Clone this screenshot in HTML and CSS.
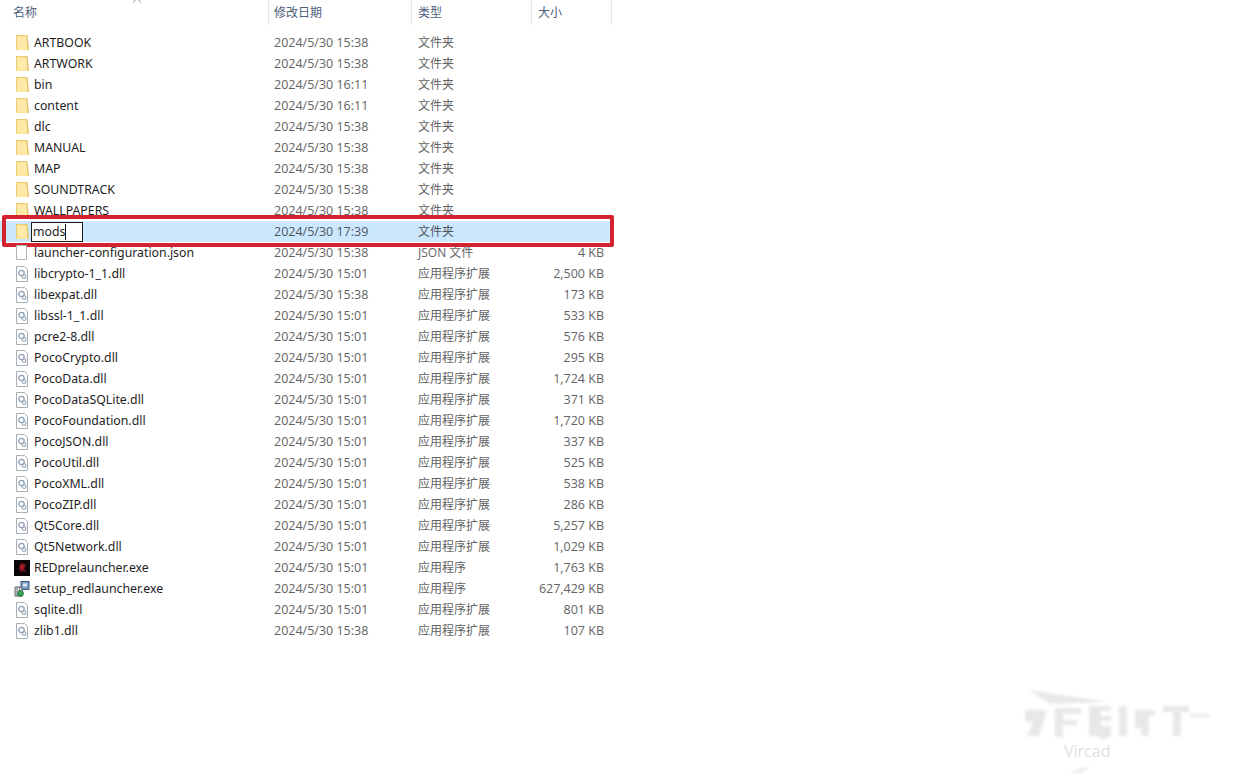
FILE: index.html
```html
<!DOCTYPE html>
<html lang="zh-CN">
  <head>
    <meta charset="UTF-8" />
    <title>mods</title>
    <link rel="stylesheet" href="styles.css">
  </head>
  <body>
    <svg class="icon-defs" width="0" height="0">
      <symbol id="folder" viewBox="0 0 16 16">
        <path d="M2 0h11.500l1.500 15H2z" fill="#fce08a"/>
        <path d="M2 0h11v1H3v13.500H2z" fill="#eccb73"/>
        <path d="M3 1.500h9.500l1 13H3z" fill="#fee9a6"/>
        <path d="M12.800 .5l1.500 14.500" stroke="#d7b566" stroke-width=".9" fill="none"/>
      </symbol>
      <symbol id="blank" viewBox="0 0 16 16">
        <path d="M2.500 .5h10v14h-10z" fill="#fff" stroke="#b4b4b4"/>
      </symbol>
      <symbol id="dll" viewBox="0 0 16 16">
        <path d="M2.500 .5h8l3 3v12h-11z" fill="#fff" stroke="#a9aeb5"/>
        <circle cx="7.500" cy="7" r="2.700" fill="none" stroke="#8a9db3" stroke-width="1.300"/>
        <circle cx="10" cy="10.500" r="1.900" fill="none" stroke="#9fb0bf" stroke-width="1.200"/>
      </symbol>
    </svg>

    <div class="explorer">
      <div class="header">
        <div class="head-cell">名称
          <svg class="sort-arrow" width="10" height="5" viewBox="0 0 10 5"><path d="M1 4.500L5 .5l4 4" fill="none" stroke="#8c8c8c"/></svg>
        </div>
        <div class="head-cell">修改日期</div>
        <div class="head-cell">类型</div>
        <div class="head-cell">大小</div>
      </div>

      <div class="rows">
        <div class="row"><div class="name"><svg class="icon"><use href="#folder"/></svg>ARTBOOK</div><div class="date">2024/5/30 15:38</div><div class="type">文件夹</div><div class="size"></div></div>
        <div class="row"><div class="name"><svg class="icon"><use href="#folder"/></svg>ARTWORK</div><div class="date">2024/5/30 15:38</div><div class="type">文件夹</div><div class="size"></div></div>
        <div class="row"><div class="name"><svg class="icon"><use href="#folder"/></svg>bin</div><div class="date">2024/5/30 16:11</div><div class="type">文件夹</div><div class="size"></div></div>
        <div class="row"><div class="name"><svg class="icon"><use href="#folder"/></svg>content</div><div class="date">2024/5/30 16:11</div><div class="type">文件夹</div><div class="size"></div></div>
        <div class="row"><div class="name"><svg class="icon"><use href="#folder"/></svg>dlc</div><div class="date">2024/5/30 15:38</div><div class="type">文件夹</div><div class="size"></div></div>
        <div class="row"><div class="name"><svg class="icon"><use href="#folder"/></svg>MANUAL</div><div class="date">2024/5/30 15:38</div><div class="type">文件夹</div><div class="size"></div></div>
        <div class="row"><div class="name"><svg class="icon"><use href="#folder"/></svg>MAP</div><div class="date">2024/5/30 15:38</div><div class="type">文件夹</div><div class="size"></div></div>
        <div class="row"><div class="name"><svg class="icon"><use href="#folder"/></svg>SOUNDTRACK</div><div class="date">2024/5/30 15:38</div><div class="type">文件夹</div><div class="size"></div></div>
        <div class="row"><div class="name"><svg class="icon"><use href="#folder"/></svg>WALLPAPERS</div><div class="date">2024/5/30 15:38</div><div class="type">文件夹</div><div class="size"></div></div>
        <div class="row selected">
          <div class="name"><svg class="icon"><use href="#folder"/></svg><div class="rename"><span class="rename-text">mods</span></div></div><div class="date">2024/5/30 17:39</div><div class="type">文件夹</div><div class="size"></div>
          <div class="highlight-box"></div>
        </div>
        <div class="row"><div class="name"><svg class="icon"><use href="#blank"/></svg>launcher-configuration.json</div><div class="date">2024/5/30 15:38</div><div class="type">JSON 文件</div><div class="size">4 KB</div></div>
        <div class="row"><div class="name"><svg class="icon"><use href="#dll"/></svg>libcrypto-1_1.dll</div><div class="date">2024/5/30 15:01</div><div class="type">应用程序扩展</div><div class="size">2,500 KB</div></div>
        <div class="row"><div class="name"><svg class="icon"><use href="#dll"/></svg>libexpat.dll</div><div class="date">2024/5/30 15:38</div><div class="type">应用程序扩展</div><div class="size">173 KB</div></div>
        <div class="row"><div class="name"><svg class="icon"><use href="#dll"/></svg>libssl-1_1.dll</div><div class="date">2024/5/30 15:01</div><div class="type">应用程序扩展</div><div class="size">533 KB</div></div>
        <div class="row"><div class="name"><svg class="icon"><use href="#dll"/></svg>pcre2-8.dll</div><div class="date">2024/5/30 15:01</div><div class="type">应用程序扩展</div><div class="size">576 KB</div></div>
        <div class="row"><div class="name"><svg class="icon"><use href="#dll"/></svg>PocoCrypto.dll</div><div class="date">2024/5/30 15:01</div><div class="type">应用程序扩展</div><div class="size">295 KB</div></div>
        <div class="row"><div class="name"><svg class="icon"><use href="#dll"/></svg>PocoData.dll</div><div class="date">2024/5/30 15:01</div><div class="type">应用程序扩展</div><div class="size">1,724 KB</div></div>
        <div class="row"><div class="name"><svg class="icon"><use href="#dll"/></svg>PocoDataSQLite.dll</div><div class="date">2024/5/30 15:01</div><div class="type">应用程序扩展</div><div class="size">371 KB</div></div>
        <div class="row"><div class="name"><svg class="icon"><use href="#dll"/></svg>PocoFoundation.dll</div><div class="date">2024/5/30 15:01</div><div class="type">应用程序扩展</div><div class="size">1,720 KB</div></div>
        <div class="row"><div class="name"><svg class="icon"><use href="#dll"/></svg>PocoJSON.dll</div><div class="date">2024/5/30 15:01</div><div class="type">应用程序扩展</div><div class="size">337 KB</div></div>
        <div class="row"><div class="name"><svg class="icon"><use href="#dll"/></svg>PocoUtil.dll</div><div class="date">2024/5/30 15:01</div><div class="type">应用程序扩展</div><div class="size">525 KB</div></div>
        <div class="row"><div class="name"><svg class="icon"><use href="#dll"/></svg>PocoXML.dll</div><div class="date">2024/5/30 15:01</div><div class="type">应用程序扩展</div><div class="size">538 KB</div></div>
        <div class="row"><div class="name"><svg class="icon"><use href="#dll"/></svg>PocoZIP.dll</div><div class="date">2024/5/30 15:01</div><div class="type">应用程序扩展</div><div class="size">286 KB</div></div>
        <div class="row"><div class="name"><svg class="icon"><use href="#dll"/></svg>Qt5Core.dll</div><div class="date">2024/5/30 15:01</div><div class="type">应用程序扩展</div><div class="size">5,257 KB</div></div>
        <div class="row"><div class="name"><svg class="icon"><use href="#dll"/></svg>Qt5Network.dll</div><div class="date">2024/5/30 15:01</div><div class="type">应用程序扩展</div><div class="size">1,029 KB</div></div>
        <div class="row"><div class="name">
          <svg class="icon" viewBox="0 0 16 16"><rect width="16" height="16" fill="#0b0507"/><path d="M6 4l4-1 2 3-2 2 2 4-4-1-1 2-2-5z" fill="#7d151c"/><circle cx="8" cy="7" r="2" fill="#a81d26"/></svg>REDprelauncher.exe</div><div class="date">2024/5/30 15:01</div><div class="type">应用程序</div><div class="size">1,763 KB</div></div>
        <div class="row"><div class="name">
          <svg class="icon" viewBox="0 0 16 16"><rect x="7" y="0.500" width="8" height="8" fill="#7d9cc4" stroke="#3e5a80"/><rect x="9" y="2.500" width="4" height="3" fill="#dbe7f5"/><path d="M1 6h7v9H1z" fill="#dfe3e8" stroke="#55606e"/><path d="M3 6v9M5.500 6v9" stroke="#55606e" stroke-width=".7"/><circle cx="6.500" cy="12.500" r="3" fill="#3fa35a" stroke="#1e5e33" stroke-width=".7"/></svg>setup_redlauncher.exe</div><div class="date">2024/5/30 15:01</div><div class="type">应用程序</div><div class="size">627,429 KB</div></div>
        <div class="row"><div class="name"><svg class="icon"><use href="#dll"/></svg>sqlite.dll</div><div class="date">2024/5/30 15:01</div><div class="type">应用程序扩展</div><div class="size">801 KB</div></div>
        <div class="row"><div class="name"><svg class="icon"><use href="#dll"/></svg>zlib1.dll</div><div class="date">2024/5/30 15:38</div><div class="type">应用程序扩展</div><div class="size">107 KB</div></div>
      </div>
    </div>

    <!-- faint site watermark, bottom right -->
    <svg class="watermark" width="200" height="100" viewBox="0 0 200 100">
      <g fill="#e8e8e8" filter="blur(1.500px)">
        <path d="M6 5l80 12-58 2z"/>
        <path d="M3 25h22l-8 26H5l6-14H3zM33 23h26v6H41v6h14v5H41v12h-8zM67 21h22v5H79v5h10v5H79v5h10v10l-8 4-6-4h-8zM97 21h8v30h14v-8h-6V25h20v5h-6v21H97zM141 21h26v6h-8v24h-8V27h-10zM168 29h20v3h-20z"/>
        <path d="M48 87l20-6-8 7z"/>
      </g>
      <text class="watermark-text" x="42" y="72">Vircad</text>
    </svg>
  </body>
</html>
```

FILE: styles.css
```css
* {
  margin: 0;
  padding: 0;
  box-sizing: border-box;
}

html,
body {
  height: 100%;
  background: #fff;
  overflow: hidden;
}

body {
  position: relative;
  font-family: "Open Sans", "Noto Sans CJK SC", sans-serif;
  font-size: 12.5px;
  color: #1e1e1e;
}

.icon-defs {
  position: absolute;
}

.explorer {
  width: 612px;
}

.header,
.row {
  display: grid;
  grid-template-columns: 268px 143px 120px 80px;
}

.header {
  grid-template-columns: 269px 143px 120px 80px;
  height: 25px;
  margin-bottom: 7px;
}

.head-cell {
  position: relative;
  height: 25px;
  line-height: 26px;
  padding-left: 6px;
  font-size: 12px;
  color: #4c607a;
  border-right: 1px solid #e4e6e8;
}

.head-cell:first-child {
  padding-left: 13px;
}

.head-cell:nth-child(2) {
  padding-left: 5px;
}

.sort-arrow {
  position: absolute;
  top: -2px;
  left: 132px;
}

.row {
  position: relative;
  height: 21px;
  line-height: 21px;
}

.row > div {
  white-space: nowrap;
}

.name {
  display: flex;
  align-items: center;
  gap: 4px;
  padding-left: 14px;
  font-family: "Noto Sans", "Noto Sans CJK SC", sans-serif;
  font-size: 12.3px;
}

.icon {
  width: 16px;
  height: 16px;
  flex: none;
}

.date,
.type {
  padding-left: 6px;
  color: #636363;
}

.type {
  padding-left: 7px;
  font-size: 12px;
}

.size {
  padding-right: 7px;
  text-align: right;
  color: #636363;
}

.selected {
  background: #cce8ff;
}

.selected .date,
.selected .type {
  color: #50565c;
}

.rename {
  display: flex;
  align-items: center;
  width: 52px;
  height: 20px;
  margin-left: -3px;
  padding-left: 1px;
  background: #fff;
  border: 1px solid #1a1a1a;
}

.rename-text {
  height: 16px;
  line-height: 15px;
  border-right: 1px solid #1a1a1a;
}

.highlight-box {
  position: absolute;
  top: -6px;
  left: 2px;
  width: 612px;
  height: 32px;
  border: 4px solid #d2232f;
  border-radius: 2px;
}

.watermark {
  position: absolute;
  left: 1022px;
  top: 685px;
}

.watermark-text {
  font-size: 16px;
  fill: #e0e0e0;
}
```
